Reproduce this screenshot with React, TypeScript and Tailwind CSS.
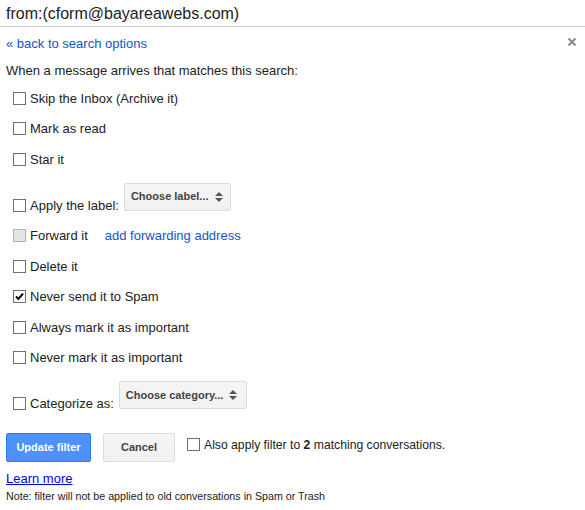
import React from "react";

type Mark = "off" | "on" | "disabled";

function Box({ state = "off" }: { state?: Mark }) {
  if (state === "disabled") {
    return <span className="inline-block w-[13px] h-[13px] border border-[#b4b4b4] bg-[#e4e4e4] shrink-0" />;
  }
  return (
    <span className="inline-flex items-center justify-center w-[13px] h-[13px] border border-[#707070] bg-white shrink-0">
      {state === "on" && (
        <svg width="9" height="9" viewBox="0 0 9 9">
          <path d="M1 4.5 L3.4 7 L8 1.6" fill="none" stroke="#000" strokeWidth="2" />
        </svg>
      )}
    </span>
  );
}

function Arrows() {
  return (
    <svg width="8" height="10" viewBox="0 0 8 10" className="ml-[6px]">
      <path d="M4 0 L8 4 L0 4 Z" fill="#555" />
      <path d="M0 6 L8 6 L4 10 Z" fill="#555" />
    </svg>
  );
}

function Select({ text, width }: { text: string; width: string }) {
  return (
    <span
      className={`inline-flex items-center h-[28px] ${width} pl-[6px] mb-[10px] border border-[#dcdcdc] rounded-[2px] bg-gradient-to-b from-[#f5f5f5] to-[#f1f1f1] text-[11px] font-bold text-[#444]`}
    >
      {text}
      <Arrows />
    </span>
  );
}

function Row({ label, state, extra }: { label: string; state?: Mark; extra?: React.ReactNode }) {
  return (
    <div className="h-[30.5px] flex items-center pl-[7px]">
      <Box state={state} />
      <span className="ml-[4px]">{label}</span>
      {extra}
    </div>
  );
}

function SelectRow({ label, select }: { label: string; select: React.ReactNode }) {
  return (
    <div className="mt-[8px] flex items-end">
      <div className="h-[30.5px] flex items-center pl-[7px]">
        <Box />
        <span className="ml-[4px]">{label}</span>
      </div>
      <div className="ml-[5px]">{select}</div>
    </div>
  );
}

export default function App() {
  return (
    <div className="w-[585px] h-[510px] bg-white text-[#222] text-[13px] font-['Liberation_Sans',Arial,sans-serif] overflow-hidden">
      <div className="h-[27px] border-b border-[#cccccc] pl-[6px] pt-[1px] flex items-center text-[16px]">
        from:(cform@bayareawebs.com)
      </div>
      <div className="pl-[6px]">
        <div className="h-[34px] flex items-center justify-between pr-[9px]">
          <a className="text-[#15c] cursor-pointer">« back to search options</a>
          <svg width="8" height="8" viewBox="0 0 8 8" className="mb-[5px]">
            <path d="M0.5 0.5 L7.5 7.5 M7.5 0.5 L0.5 7.5" stroke="#8a8a8a" strokeWidth="2" />
          </svg>
        </div>
        <div className="h-[20px] flex items-center">When a message arrives that matches this search:</div>
        <div className="mt-[2px]">
          <Row label="Skip the Inbox (Archive it)" />
          <Row label="Mark as read" />
          <Row label="Star it" />
          <SelectRow label="Apply the label:" select={<Select text="Choose label..." width="w-[107px]" />} />
          <Row
            label="Forward it"
            state="disabled"
            extra={<a className="ml-[17px] text-[#15c] cursor-pointer">add forwarding address</a>}
          />
          <Row label="Delete it" />
          <Row label="Never send it to Spam" state="on" />
          <Row label="Always mark it as important" />
          <Row label="Never mark it as important" />
          <SelectRow label="Categorize as:" select={<Select text="Choose category..." width="w-[128px]" />} />
        </div>
        <div className="mt-[14px] flex items-center">
          <button className="h-[29px] w-[85px] bg-[#4d90fe] border border-[#3079ed] rounded-[2px] text-white text-[11px] font-bold">
            Update filter
          </button>
          <button className="ml-[12px] h-[29px] w-[72px] bg-gradient-to-b from-[#f5f5f5] to-[#f1f1f1] border border-[#dcdcdc] rounded-[2px] text-[#444] text-[11px] font-bold">
            Cancel
          </button>
          <div className="ml-[12px] mb-[5px] flex items-center text-[12.2px]">
            <Box />
            <span className="ml-[4px]">
              Also apply filter to <b>2</b> matching conversations.
            </span>
          </div>
        </div>
        <div className="mt-[9px] h-[16px] leading-[16px]">
          <a className="text-[#0000ee] underline cursor-pointer">Learn more</a>
        </div>
        <div className="mt-[1px] h-[16px] leading-[16px] text-[10.7px]">
          Note: filter will not be applied to old conversations in Spam or Trash
        </div>
      </div>
    </div>
  );
}
